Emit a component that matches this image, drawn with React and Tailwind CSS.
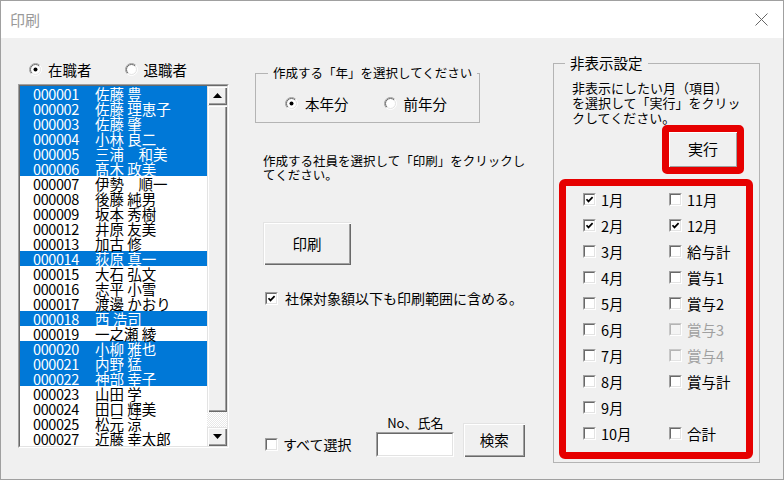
import React from "react";

const rows = [
  ["000001", "佐藤 豊", true],
  ["000002", "佐藤 理恵子", true],
  ["000003", "佐藤 肇", true],
  ["000004", "小林 良二", true],
  ["000005", "三浦　和美", true],
  ["000006", "髙木 政美", true],
  ["000007", "伊勢　順一", false],
  ["000008", "後藤 純男", false],
  ["000009", "坂本 秀樹", false],
  ["000012", "井原 友美", false],
  ["000013", "加古 修", false],
  ["000014", "荻原 真一", true],
  ["000015", "大石 弘文", false],
  ["000016", "志平 小雪", false],
  ["000017", "渡邊 かおり", false],
  ["000018", "西 浩司", true],
  ["000019", "一之瀬 綾", false],
  ["000020", "小柳 雅也", true],
  ["000021", "内野 猛", true],
  ["000022", "神部 幸子", true],
  ["000023", "山田 学", false],
  ["000024", "田口 輝美", false],
  ["000025", "松元 涼", false],
  ["000027", "近藤 幸太郎", false],
];

const grid = [
  [["1月", true], ["11月", false]],
  [["2月", true], ["12月", true]],
  [["3月", false], ["給与計", false]],
  [["4月", false], ["賞与1", false]],
  [["5月", false], ["賞与2", false]],
  [["6月", false], ["賞与3", false, true]],
  [["7月", false], ["賞与4", false, true]],
  [["8月", false], ["賞与計", false]],
  [["9月", false], null],
  [["10月", false], ["合計", false]],
];

function Check({ checked, disabled }) {
  return (
    <span
      className={
        disabled
          ? "block w-[13px] h-[13px] shrink-0 border-t border-l border-t-[#c8c8c8] border-l-[#c8c8c8] border-b border-r border-b-white border-r-white"
          : "block w-[13px] h-[13px] shrink-0 border-t border-l border-t-[#a0a0a0] border-l-[#a0a0a0] border-b border-r border-b-white border-r-white"
      }
    >
      <span
        className={
          disabled
            ? "flex items-center justify-center w-full h-full border-t border-l border-t-[#b4b4b4] border-l-[#b4b4b4] border-b border-r border-b-[#e3e3e3] border-r-[#e3e3e3] bg-[#f4f4f4]"
            : "flex items-center justify-center w-full h-full border-t border-l border-t-[#696969] border-l-[#696969] border-b border-r border-b-[#e3e3e3] border-r-[#e3e3e3] bg-white"
        }
      >
        {checked && (
          <svg width="9" height="9" viewBox="0 0 9 9">
            <path d="M1.5 4.2 L3.5 6.4 L7.6 2.2" stroke="#000" strokeWidth="1.7" fill="none" />
          </svg>
        )}
      </span>
    </span>
  );
}

function Radio({ checked }) {
  return (
    <svg width="13" height="13" viewBox="0 0 13 13" className="shrink-0">
      <circle cx="6.5" cy="6.5" r="5.5" fill="#fff" />
      <path d="M2.257 10.743 A6 6 0 0 1 10.743 2.257" stroke="#a0a0a0" strokeWidth="1" fill="none" />
      <path d="M2.964 10.036 A5 5 0 0 1 10.036 2.964" stroke="#696969" strokeWidth="1" fill="none" />
      <path d="M10.743 2.257 A6 6 0 0 1 2.257 10.743" stroke="#ffffff" strokeWidth="1" fill="none" />
      <path d="M10.036 2.964 A5 5 0 0 1 2.964 10.036" stroke="#e3e3e3" strokeWidth="1" fill="none" />
      {checked && <circle cx="6.5" cy="6.5" r="2" fill="#000" />}
    </svg>
  );
}

function ScrollBtn({ up }) {
  return (
    <div className="h-[19px] w-full flex items-center justify-center bg-[#f0f0f0] shadow-[inset_1px_1px_0_#e3e3e3,inset_2px_2px_0_#fff,inset_-1px_-1px_0_#696969,inset_-2px_-2px_0_#a0a0a0]">
      <svg width="9" height="5" viewBox="0 0 9 5">
        {up ? <polygon points="4.5,0 9,5 0,5" fill="#000" /> : <polygon points="0,0 9,0 4.5,5" fill="#000" />}
      </svg>
    </div>
  );
}

export default function App() {
  return (
    <div className="w-[784px] h-[480px] bg-[#f0f0f0] border border-[#a0a0a0] flex flex-col overflow-hidden font-['Noto_Sans_CJK_JP',sans-serif] text-black">
      {/* Title bar */}
      <div className="h-[37px] bg-white flex items-center justify-between shrink-0">
        <span className="ml-[9px] text-[15px] leading-[18px] text-[#999]">印刷</span>
        <svg width="13" height="13" viewBox="0 0 13 13" className="mr-[15px]">
          <path d="M0.5 0.5 L12.5 12.5 M12.5 0.5 L0.5 12.5" stroke="#666" strokeWidth="1" />
        </svg>
      </div>

      {/* Body */}
      <div className="flex-1 flex">
        {/* Left column */}
        <div className="ml-[17px] w-[211px] flex flex-col">
          <div className="mt-[24px] h-[15px] flex items-center text-[14.5px] leading-[15px]">
            <span className="ml-[11px]"><Radio checked /></span>
            <span className="ml-[6px]">在職者</span>
            <span className="ml-[33px]"><Radio /></span>
            <span className="ml-[6px]">退職者</span>
          </div>
          <div className="mt-[7px] h-[364px] w-[211px] border-t border-l border-t-[#a0a0a0] border-l-[#a0a0a0] border-b border-r border-b-white border-r-white">
            <div className="w-full h-full flex border-t border-l border-t-[#696969] border-l-[#696969] border-b border-r border-b-[#e3e3e3] border-r-[#e3e3e3] overflow-hidden">
              <div className="flex-1 bg-white">
                {rows.map(([id, name, sel]) => (
                  <div
                    key={id}
                    className={
                      sel
                        ? "h-[15px] flex items-center pl-[13px] text-[14.5px] leading-[15px] bg-[#0078d7] text-white whitespace-nowrap"
                        : "h-[15px] flex items-center pl-[13px] text-[14.5px] leading-[15px] whitespace-nowrap"
                    }
                  >
                    <span className="w-[62px] tracking-[-0.4px]">{id}</span>
                    <span>{name}</span>
                  </div>
                ))}
              </div>
              <div className="w-[20px] flex flex-col">
                <ScrollBtn up />
                <div className="h-[307px] bg-[#f0f0f0] shadow-[inset_1px_1px_0_#e3e3e3,inset_2px_2px_0_#fff,inset_-1px_-1px_0_#696969,inset_-2px_-2px_0_#a0a0a0]" />
                <div className="flex-1 bg-[repeating-conic-gradient(#ffffff_0%_25%,#e8e8e8_0%_50%)] bg-[length:2px_2px]" />
                <ScrollBtn />
              </div>
            </div>
          </div>
        </div>

        {/* Middle column */}
        <div className="ml-[26px] w-[270px] flex flex-col">
          <div className="mt-[35px] h-[50px] w-[225px] border border-[#b4b4b4] relative">
            <span className="absolute left-[12px] -top-[9px] px-[5px] bg-[#f0f0f0] text-[12.5px] leading-[16px] whitespace-nowrap">
              作成する「年」を選択してください
            </span>
            <div className="pt-[22px] pl-[29px] h-[15px] box-content flex items-center text-[14.5px] leading-[15px]">
              <Radio checked />
              <span className="ml-[7px]">本年分</span>
              <span className="ml-[35px]"><Radio /></span>
              <span className="ml-[7px]">前年分</span>
            </div>
          </div>

          <p className="mt-[31px] ml-[8px] text-[12.5px] leading-[14px] whitespace-nowrap">
            作成する社員を選択して「印刷」をクリックし
            <br />
            てください。
          </p>

          <button className="mt-[40px] ml-[8px] w-[88px] h-[43px] bg-[#f0f0f0] text-[14.5px] shadow-[inset_1px_1px_0_#e3e3e3,inset_2px_2px_0_#fff,inset_-1px_-1px_0_#696969,inset_-2px_-2px_0_#a0a0a0]">
            印刷
          </button>

          <div className="mt-[26px] ml-[10px] h-[15px] flex items-center text-[14px] leading-[15px]">
            <Check checked />
            <span className="ml-[7px] whitespace-nowrap">社保対象額以下も印刷範囲に含める。</span>
          </div>

          <div className="mt-[110px] ml-[10px] flex items-end">
            <div className="w-[112px] h-[15px] mb-[5px] flex items-center text-[14px] leading-[15px]">
              <Check />
              <span className="ml-[5px] whitespace-nowrap">すべて選択</span>
            </div>
            <div className="w-[78px] flex flex-col items-center">
              <span className="text-[13px] leading-[14px] whitespace-nowrap">No、氏名</span>
              <div className="mt-[2px] w-[78px] h-[25px] border-t border-l border-t-[#a0a0a0] border-l-[#a0a0a0] border-b border-r border-b-white border-r-white">
                <div className="w-full h-full bg-white border-t border-l border-t-[#696969] border-l-[#696969] border-b border-r border-b-[#e3e3e3] border-r-[#e3e3e3]" />
              </div>
            </div>
            <button className="ml-[9px] w-[62px] h-[34px] bg-[#f0f0f0] text-[14.5px] shadow-[inset_1px_1px_0_#e3e3e3,inset_2px_2px_0_#fff,inset_-1px_-1px_0_#696969,inset_-2px_-2px_0_#a0a0a0]">
              検索
            </button>
          </div>
        </div>

        {/* Right column */}
        <div className="ml-[28px] w-[207px] flex flex-col">
          <div className="mt-[25px] h-[400px] border border-[#b4b4b4] relative flex flex-col">
            <span className="absolute left-[11px] -top-[10px] px-[5px] bg-[#f0f0f0] text-[14.5px] leading-[18px]">
              非表示設定
            </span>
            <p className="pt-[16px] pl-[18px] text-[13px] leading-[15px] whitespace-nowrap">
              非表示にしたい月（項目）
              <br />
              を選択して「実行」をクリッ
              <br />
              クしてください。
            </p>
            <div className="self-end mr-[15px] w-[82px] h-[49px] border-[7px] border-[#e60000] rounded-[5px] bg-[#e60000]">
              <button className="w-full h-full bg-[#f0f0f0] text-[15px] shadow-[inset_1px_1px_0_#fff,inset_-1px_-1px_0_#a0a0a0]">
                実行
              </button>
            </div>
            <div className="mt-[5px] ml-[5px] w-[194px] h-[280px] border-[7px] border-[#e60000] rounded-[6px]">
              <div className="grid grid-cols-[86px_1fr] pl-[17px]">
                {grid.map((row, i) => (
                  <React.Fragment key={i}>
                    {row.map((cell, j) =>
                      cell ? (
                        <div key={j} className="h-[26px] flex items-center text-[14.5px] leading-[15px]">
                          <Check checked={cell[1]} disabled={cell[2]} />
                          <span className={cell[2] ? "ml-[5px] text-[#a0a0a0]" : "ml-[5px]"}>{cell[0]}</span>
                        </div>
                      ) : (
                        <div key={j} className="h-[26px]" />
                      )
                    )}
                  </React.Fragment>
                ))}
              </div>
            </div>
          </div>
        </div>
      </div>
    </div>
  );
}
